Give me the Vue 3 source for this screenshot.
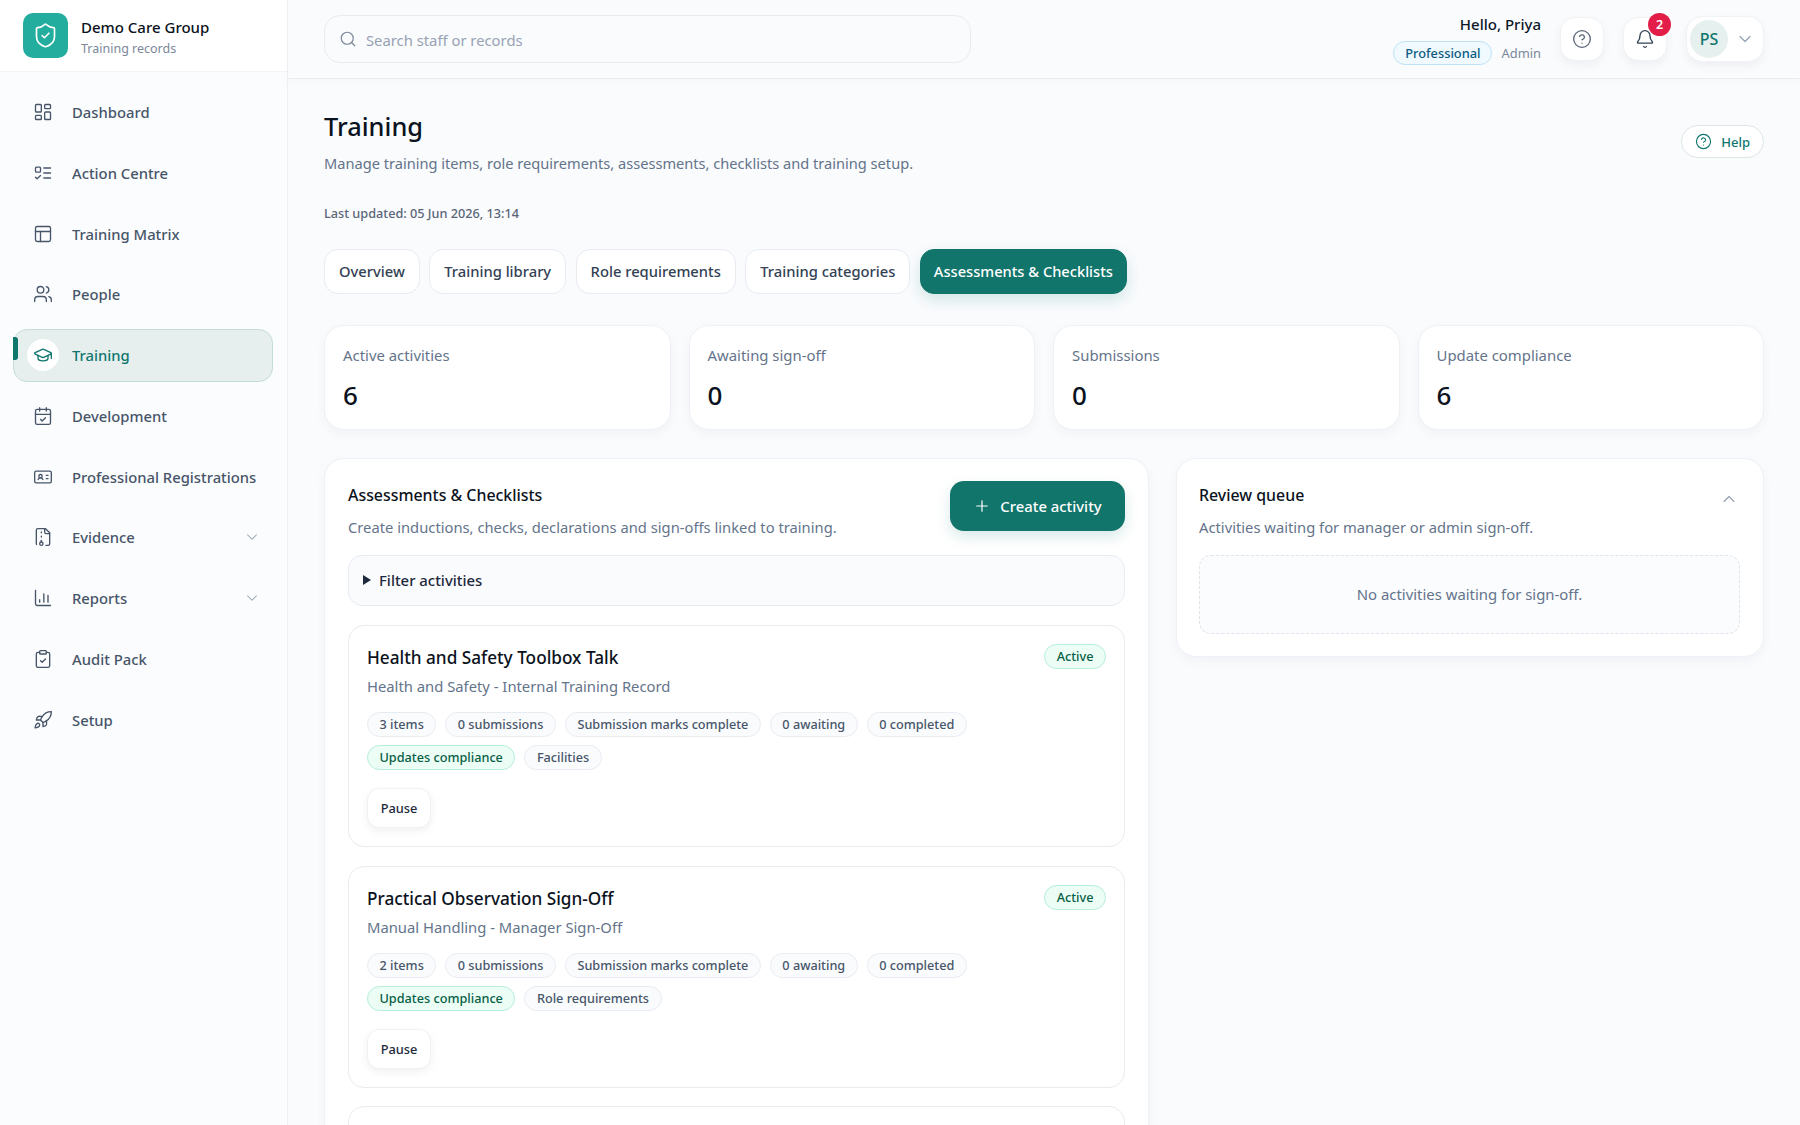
<script setup>
import { h } from 'vue'

const icons = {
  shield: ['M20 13c0 5-3.5 7.5-7.66 8.95a1 1 0 0 1-.67-.01C7.5 20.5 4 18 4 13V6a1 1 0 0 1 1-1c2 0 4.5-1.2 6.24-2.72a1.17 1.17 0 0 1 1.52 0C14.51 3.81 17 5 19 5a1 1 0 0 1 1 1z', 'm9 12 2 2 4-4'],
  dashboard: ['M4 3h5a1 1 0 0 1 1 1v7a1 1 0 0 1-1 1H4a1 1 0 0 1-1-1V4a1 1 0 0 1 1-1z', 'M15 3h5a1 1 0 0 1 1 1v3a1 1 0 0 1-1 1h-5a1 1 0 0 1-1-1V4a1 1 0 0 1 1-1z', 'M15 12h5a1 1 0 0 1 1 1v7a1 1 0 0 1-1 1h-5a1 1 0 0 1-1-1v-7a1 1 0 0 1 1-1z', 'M4 16h5a1 1 0 0 1 1 1v3a1 1 0 0 1-1 1H4a1 1 0 0 1-1-1v-3a1 1 0 0 1 1-1z'],
  todo: ['M4 5h4a1 1 0 0 1 1 1v4a1 1 0 0 1-1 1H4a1 1 0 0 1-1-1V6a1 1 0 0 1 1-1z', 'm3 17 2 2 4-4', 'M13 6h8', 'M13 12h8', 'M13 18h8'],
  table: ['M5 3h14a2 2 0 0 1 2 2v14a2 2 0 0 1-2 2H5a2 2 0 0 1-2-2V5a2 2 0 0 1 2-2z', 'M3 9h18', 'M9 9v12'],
  users: ['M16 21v-2a4 4 0 0 0-4-4H6a4 4 0 0 0-4 4v2', 'M5 7a4 4 0 1 0 8 0a4 4 0 1 0-8 0', 'M22 21v-2a4 4 0 0 0-3-3.87', 'M16 3.13a4 4 0 0 1 0 7.75'],
  cap: ['M21.42 10.922a1 1 0 0 0-.019-1.838L12.83 5.18a2 2 0 0 0-1.66 0L2.6 9.08a1 1 0 0 0 0 1.832l8.57 3.908a2 2 0 0 0 1.66 0z', 'M22 10v6', 'M6 12.5V16a6 3 0 0 0 12 0v-3.5'],
  calendar: ['M8 2v4', 'M16 2v4', 'M5 4h14a2 2 0 0 1 2 2v14a2 2 0 0 1-2 2H5a2 2 0 0 1-2-2V6a2 2 0 0 1 2-2z', 'M3 10h18', 'm9 16 2 2 4-4'],
  card: ['M16 10h2', 'M16 14h2', 'M6.17 15a3 3 0 0 1 5.66 0', 'M7 11a2 2 0 1 0 4 0a2 2 0 1 0-4 0', 'M4 5h16a2 2 0 0 1 2 2v10a2 2 0 0 1-2 2H4a2 2 0 0 1-2-2V7a2 2 0 0 1 2-2z'],
  archive: ['M10 12v-1', 'M10 18v-2', 'M10 7V6', 'M14 2v4a2 2 0 0 0 2 2h4', 'M15.5 22H18a2 2 0 0 0 2-2V7l-5-5H6a2 2 0 0 0-2 2v16a2 2 0 0 0 .274 1.01', 'M8 20a2 2 0 1 0 4 0a2 2 0 1 0-4 0'],
  chart: ['M3 3v16a2 2 0 0 0 2 2h16', 'M8 17v-3', 'M13 17V7', 'M18 17V9'],
  clipboard: ['M9 2h6a1 1 0 0 1 1 1v2a1 1 0 0 1-1 1H9a1 1 0 0 1-1-1V3a1 1 0 0 1 1-1z', 'M16 4h2a2 2 0 0 1 2 2v14a2 2 0 0 1-2 2H6a2 2 0 0 1-2-2V6a2 2 0 0 1 2-2h2', 'm9 14 2 2 4-4'],
  rocket: ['M4.5 16.5c-1.5 1.26-2 5-2 5s3.74-.5 5-2c.71-.84.7-2.13-.09-2.91a2.18 2.18 0 0 0-2.91-.09z', 'm12 15-3-3a22 22 0 0 1 2-3.95A12.88 12.88 0 0 1 22 2c0 2.72-.78 7.5-6 11a22.35 22.35 0 0 1-4 2z', 'M9 12H4s.55-3.03 2-4c1.62-1.08 5 0 5 0', 'M12 15v5s3.03-.55 4-2c1.08-1.62 0-5 0-5'],
  help: ['M2 12a10 10 0 1 0 20 0a10 10 0 1 0-20 0', 'M9.09 9a3 3 0 0 1 5.83 1c0 2-3 3-3 3', 'M12 17h.01'],
  bell: ['M10.268 21a2 2 0 0 0 3.464 0', 'M3.262 15.326A1 1 0 0 0 4 17h16a1 1 0 0 0 .74-1.673C19.41 13.956 18 12.499 18 8A6 6 0 0 0 6 8c0 4.499-1.411 5.956-2.738 7.326'],
  search: ['M3 11a8 8 0 1 0 16 0a8 8 0 1 0-16 0', 'm21 21-4.3-4.3'],
  down: ['m6 9 6 6 6-6'],
  up: ['m18 15-6-6-6 6'],
  plus: ['M5 12h14', 'M12 5v14']
}

const Icon = (props) =>
  h(
    'svg',
    { viewBox: '0 0 24 24', fill: 'none', stroke: 'currentColor', 'stroke-linecap': 'round', 'stroke-linejoin': 'round' },
    icons[props.name].map((d) => h('path', { d }))
  )
Icon.props = ['name']

const navItems = [
  { label: 'Dashboard', icon: 'dashboard' },
  { label: 'Action Centre', icon: 'todo' },
  { label: 'Training Matrix', icon: 'table' },
  { label: 'People', icon: 'users' },
  { label: 'Training', icon: 'cap', active: true },
  { label: 'Development', icon: 'calendar' },
  { label: 'Professional Registrations', icon: 'card' },
  { label: 'Evidence', icon: 'archive', caret: true },
  { label: 'Reports', icon: 'chart', caret: true },
  { label: 'Audit Pack', icon: 'clipboard' },
  { label: 'Setup', icon: 'rocket' }
]

const tabs = ['Overview', 'Training library', 'Role requirements', 'Training categories', 'Assessments & Checklists']

const stats = [
  { label: 'Active activities', value: 6 },
  { label: 'Awaiting sign-off', value: 0 },
  { label: 'Submissions', value: 0 },
  { label: 'Update compliance', value: 6 }
]

const activities = [
  {
    title: 'Health and Safety Toolbox Talk',
    sub: 'Health and Safety - Internal Training Record',
    items: '3 items',
    extra: 'Facilities'
  },
  {
    title: 'Practical Observation Sign-Off',
    sub: 'Manual Handling - Manager Sign-Off',
    items: '2 items',
    extra: 'Role requirements'
  }
]
</script>

<template>
  <div class="app">
    <aside class="sidebar">
      <div class="brand">
        <div class="brand-logo"><Icon name="shield" /></div>
        <div class="brand-text">
          <div class="brand-name">Demo Care Group</div>
          <div class="brand-sub">Training records</div>
        </div>
      </div>
      <nav class="nav">
        <a v-for="item in navItems" :key="item.label" :class="['nav-item', { active: item.active }]">
          <span class="nav-icon"><Icon :name="item.icon" /></span>
          <span class="nav-label">{{ item.label }}</span>
          <Icon v-if="item.caret" name="down" class="nav-caret" />
        </a>
      </nav>
    </aside>

    <div class="content">
      <header class="topbar">
        <div class="search">
          <Icon name="search" />
          <span>Search staff or records</span>
        </div>
        <div class="user">
          <div class="hello">Hello, Priya</div>
          <div class="user-meta">
            <span class="plan">Professional</span>
            <span class="role">Admin</span>
          </div>
        </div>
        <button class="round-btn"><Icon name="help" /></button>
        <button class="round-btn bell">
          <Icon name="bell" />
          <span class="badge">2</span>
        </button>
        <button class="profile">
          <span class="avatar">PS</span>
          <Icon name="down" />
        </button>
      </header>

      <main class="main">
        <div class="page-head">
          <div>
            <h1>Training</h1>
            <p class="page-sub">Manage training items, role requirements, assessments, checklists and training setup.</p>
          </div>
          <button class="help-btn"><Icon name="help" />Help</button>
        </div>
        <div class="updated">Last updated: 05 Jun 2026, 13:14</div>

        <div class="tabs">
          <button v-for="(tab, i) in tabs" :key="tab" :class="['tab', { active: i === tabs.length - 1 }]">{{ tab }}</button>
        </div>

        <div class="stats">
          <div v-for="stat in stats" :key="stat.label" class="stat">
            <div class="stat-label">{{ stat.label }}</div>
            <div class="stat-value">{{ stat.value }}</div>
          </div>
        </div>

        <div class="columns">
          <section class="panel">
            <div class="panel-head">
              <div>
                <h2>Assessments &amp; Checklists</h2>
                <p class="panel-sub">Create inductions, checks, declarations and sign-offs linked to training.</p>
              </div>
              <button class="create"><Icon name="plus" />Create activity</button>
            </div>
            <div class="filter"><span class="triangle"></span>Filter activities</div>

            <article v-for="a in activities" :key="a.title" class="activity">
              <div class="activity-top">
                <h3>{{ a.title }}</h3>
                <span class="chip green">Active</span>
              </div>
              <p class="activity-sub">{{ a.sub }}</p>
              <div class="chips">
                <span class="chip">{{ a.items }}</span>
                <span class="chip">0 submissions</span>
                <span class="chip">Submission marks complete</span>
                <span class="chip">0 awaiting</span>
                <span class="chip">0 completed</span>
              </div>
              <div class="chips">
                <span class="chip green">Updates compliance</span>
                <span class="chip">{{ a.extra }}</span>
              </div>
              <button class="pause">Pause</button>
            </article>
            <article class="activity"></article>
          </section>

          <section class="panel review">
            <div class="review-head">
              <h2>Review queue</h2>
              <Icon name="up" />
            </div>
            <p class="panel-sub">Activities waiting for manager or admin sign-off.</p>
            <div class="empty">No activities waiting for sign-off.</div>
          </section>
        </div>
      </main>
    </div>
  </div>
</template>

<style>
html,
body {
  margin: 0;
  height: 100%;
  overflow: hidden;
  background: #f9fbfd;
}
</style>

<style scoped>
.app {
  display: flex;
  height: 1125px;
  overflow: hidden;
  font-family: "Noto Sans", sans-serif;
  color: #0f172a;
  background: #f9fbfd;
}

h1, h2, h3, p {
  margin: 0;
}

button {
  font-family: inherit;
  cursor: pointer;
}

svg {
  stroke-width: 1.6;
  flex: none;
}

/* sidebar */
.sidebar {
  width: 288px;
  flex: none;
  box-sizing: border-box;
  border-right: 1px solid #edf0f4;
  background: #fbfcfe;
}

.brand {
  display: flex;
  align-items: center;
  gap: 13px;
  height: 72px;
  box-sizing: border-box;
  padding: 0 23px;
  background: #fff;
  border-bottom: 1px solid #f1f4f7;
}

.brand-logo {
  width: 45px;
  height: 45px;
  border-radius: 10px;
  background: #22ad9e;
  color: #fff;
  display: flex;
  align-items: center;
  justify-content: center;
}

.brand-logo svg {
  width: 27px;
  height: 27px;
  stroke-width: 1.5;
}

.brand-text {
  padding-top: 4px;
}

.brand-name {
  font-size: 15px;
  font-weight: 500;
  line-height: 21px;
  color: #0b1220;
}

.brand-sub {
  font-size: 12.5px;
  line-height: 21px;
  color: #7c8799;
}

.nav {
  display: flex;
  flex-direction: column;
  gap: 7.75px;
  padding: 13.5px 14px 13.5px 13px;
}

.nav-item {
  display: flex;
  align-items: center;
  height: 53px;
  box-sizing: border-box;
  padding: 0 11px 0 13px;
  border: 1px solid transparent;
  border-radius: 14px;
  font-size: 14.8px;
  font-weight: 500;
  white-space: nowrap;
  color: #475569;
  position: relative;
}

.nav-icon {
  width: 32px;
  height: 32px;
  margin-right: 13px;
  display: flex;
  align-items: center;
  justify-content: center;
  flex: none;
}

.nav-icon svg {
  width: 20px;
  height: 20px;
}

.nav-label {
  flex: 1;
}

.nav-caret {
  width: 18px;
  height: 18px;
  stroke-width: 1.4;
  color: #98a2b3;
}

.nav-item.active {
  background: #e6efee;
  border-color: #c5dcd8;
  color: #0f766e;
}

.nav-item.active::before {
  content: "";
  position: absolute;
  left: -1px;
  top: 7px;
  width: 4.5px;
  height: 23px;
  border-radius: 0 3px 3px 0;
  background: #0f766e;
}

.nav-item.active .nav-icon {
  background: #fff;
  border-radius: 50%;
}

/* top bar */
.content {
  flex: 1;
  min-width: 0;
  display: flex;
  flex-direction: column;
}

.topbar {
  height: 79px;
  flex: none;
  box-sizing: border-box;
  padding: 0 36px;
  display: flex;
  align-items: center;
  border-bottom: 1px solid #e9edf1;
  box-shadow: 0 3px 10px rgba(15, 23, 42, 0.02);
}

.search {
  width: 647px;
  height: 48px;
  box-sizing: border-box;
  display: flex;
  align-items: center;
  gap: 9px;
  padding: 0 14px;
  border: 1px solid #e8ecf1;
  border-radius: 16px;
  font-size: 14.8px;
  color: #98a2b3;
  margin-right: auto;
}

.search span {
  padding-top: 2px;
}

.search svg {
  width: 18px;
  height: 18px;
  color: #7c8799;
}

.user {
  text-align: right;
  margin-right: 19px;
}

.hello {
  font-size: 15px;
  font-weight: 500;
  line-height: 22px;
  color: #0f172a;
}

.user-meta {
  display: flex;
  align-items: center;
  gap: 9px;
  margin-top: 6px;
}

.plan {
  padding: 0 11px;
  height: 24px;
  line-height: 22px;
  box-sizing: border-box;
  border: 1px solid #bfe3f6;
  border-radius: 12px;
  background: #eff9fe;
  color: #0c5a82;
  font-size: 12.8px;
  font-weight: 500;
}

.role {
  font-size: 12.9px;
  color: #7c8799;
}

.round-btn,
.profile {
  border: 1px solid #f0f2f5;
  background: #fff;
  box-shadow: 0 4px 10px rgba(15, 23, 42, 0.05);
  display: flex;
  align-items: center;
  justify-content: center;
  padding: 0;
}

.round-btn {
  width: 44px;
  height: 44px;
  border-radius: 15px;
  color: #5b6678;
  margin-right: 19px;
  position: relative;
}

.round-btn svg {
  width: 20px;
  height: 20px;
}

.bell {
  color: #334155;
}

.badge {
  position: absolute;
  top: -5px;
  right: -5px;
  width: 23px;
  height: 23px;
  border-radius: 50%;
  background: #e11d48;
  color: #fff;
  font-size: 12.5px;
  font-weight: 600;
  line-height: 23px;
  text-align: center;
}

.profile {
  width: 78px;
  height: 46px;
  border-radius: 16px;
  justify-content: flex-start;
  padding-left: 3px;
  color: #98a2b3;
}

.avatar {
  width: 38px;
  height: 38px;
  border-radius: 50%;
  background: #e6f0ee;
  color: #0f766e;
  font-size: 16px;
  font-weight: 500;
  line-height: 38px;
  text-align: center;
  margin-right: 7px;
}

.profile svg {
  width: 20px;
  height: 20px;
  stroke-width: 1.5;
}

/* page */
.main {
  padding: 29px 36px 0;
  flex: 1;
  min-height: 0;
}

.page-head {
  display: flex;
  justify-content: space-between;
  align-items: flex-start;
}

h1 {
  font-size: 25.4px;
  font-weight: 500;
  line-height: 36px;
  color: #0b1220;
}

.page-sub {
  margin-top: 8px;
  font-size: 14.62px;
  line-height: 22px;
  color: #64748b;
}

.help-btn {
  margin-top: 17px;
  display: flex;
  align-items: center;
  gap: 9px;
  height: 33px;
  padding: 0 13px;
  border: 1px solid #dbe7e5;
  border-radius: 17px;
  background: #fff;
  color: #0f766e;
  font-size: 13px;
  font-weight: 500;
}

.help-btn svg {
  width: 17px;
  height: 17px;
}

.updated {
  margin-top: 30px;
  font-size: 12.7px;
  line-height: 18px;
  font-weight: 500;
  color: #5b6678;
}

.tabs {
  display: flex;
  gap: 9.4px;
  margin-top: 27px;
}

.tab {
  height: 44.5px;
  padding: 0 14px;
  border: 1px solid #e8ecf1;
  border-radius: 14px;
  background: #fff;
  color: #334155;
  font-size: 14.75px;
  font-weight: 500;
}

.tab.active {
  padding: 0 13px;
  font-size: 14.65px;
  background: #11756b;
  border-color: #11756b;
  color: #fff;
  box-shadow: 0 6px 14px rgba(15, 118, 110, 0.16);
}

.stats {
  display: grid;
  grid-template-columns: repeat(4, 1fr);
  gap: 18px;
  margin-top: 31px;
}

.stat {
  height: 105.5px;
  box-sizing: border-box;
  padding: 18px 18px;
  border: 1px solid #eef1f5;
  border-radius: 20px;
  background: #fff;
  box-shadow: 0 4px 12px rgba(15, 23, 42, 0.04);
}

.stat-label {
  font-size: 14.9px;
  line-height: 22px;
  color: #64748b;
}

.stat-value {
  margin-top: 11px;
  font-size: 26px;
  font-weight: 500;
  line-height: 36px;
  color: #0b1220;
}

.columns {
  display: flex;
  align-items: flex-start;
  gap: 27px;
  margin-top: 27.5px;
}

.panel {
  box-sizing: border-box;
  padding: 22px 23px;
  border: 1px solid #eef1f5;
  border-radius: 20px;
  background: #fff;
  box-shadow: 0 4px 12px rgba(15, 23, 42, 0.04);
}

.panel:first-child {
  width: 825px;
  flex: none;
}

.review {
  flex: 1;
  min-width: 0;
  padding-left: 22px;
}

.panel-head {
  display: flex;
  justify-content: space-between;
  align-items: flex-start;
}

h2 {
  font-size: 15.9px;
  font-weight: 500;
  line-height: 28px;
  color: #0b1220;
}

.panel-sub {
  margin-top: 7px;
  font-size: 14.75px;
  line-height: 22px;
  color: #64748b;
}

.create {
  height: 50px;
  width: 175px;
  display: flex;
  align-items: center;
  justify-content: center;
  gap: 9px;
  border: none;
  border-radius: 14px;
  background: #11756b;
  color: #fff;
  font-size: 14.85px;
  font-weight: 500;
  box-shadow: 0 6px 14px rgba(15, 118, 110, 0.16);
}

.create svg {
  width: 18px;
  height: 18px;
}

.filter {
  margin-top: 17px;
  height: 51px;
  box-sizing: border-box;
  display: flex;
  align-items: center;
  padding: 0 14px;
  border: 1px solid #e8ecf1;
  border-radius: 14px;
  background: #fafbfd;
  font-size: 14.9px;
  font-weight: 500;
  color: #1e293b;
}

.triangle {
  width: 0;
  height: 0;
  border-left: 8px solid #1e293b;
  border-top: 5px solid transparent;
  border-bottom: 5px solid transparent;
  margin-right: 8px;
}

.activity {
  margin-top: 18.5px;
  height: 222px;
  box-sizing: border-box;
  padding: 18px 18px;
  border: 1px solid #e8ecf1;
  border-radius: 16px;
  background: #fff;
}

.filter + .activity {
  margin-top: 19.5px;
}

.activity-top {
  display: flex;
  justify-content: space-between;
  align-items: flex-start;
}

h3 {
  font-size: 17.2px;
  font-weight: 500;
  line-height: 28px;
  color: #0b1220;
}

.activity-sub {
  margin-top: 3px;
  font-size: 14.8px;
  line-height: 22px;
  color: #64748b;
}

.chips {
  display: flex;
  gap: 9px;
  margin-top: 8px;
}

.activity-sub + .chips {
  margin-top: 15px;
}

.chip {
  height: 25px;
  box-sizing: border-box;
  padding: 0 11.5px;
  line-height: 23px;
  border: 1px solid #e8ecf1;
  border-radius: 13px;
  background: #fafbfd;
  font-size: 12.7px;
  font-weight: 500;
  color: #475569;
}

.chip.green {
  border-color: #b7eedb;
  background: #ecfdf5;
  color: #065f46;
}

.pause {
  margin-top: 18px;
  width: 64px;
  height: 40px;
  padding: 0;
  border: 1px solid #eef1f5;
  border-radius: 12px;
  background: #fff;
  color: #1e293b;
  font-size: 12.8px;
  font-weight: 500;
  box-shadow: 0 3px 8px rgba(15, 23, 42, 0.06);
}

.review-head {
  display: flex;
  justify-content: space-between;
  align-items: flex-start;
}

.review-head svg {
  width: 20px;
  height: 20px;
  stroke-width: 1.4;
  color: #98a2b3;
  margin: 8px 1px 0 0;
}

.empty {
  margin-top: 17px;
  height: 77px;
  display: flex;
  align-items: center;
  justify-content: center;
  border: 1px dashed #dfe4ea;
  border-radius: 12px;
  background: #fbfcfe;
  font-size: 14.9px;
  color: #64748b;
}
</style>
